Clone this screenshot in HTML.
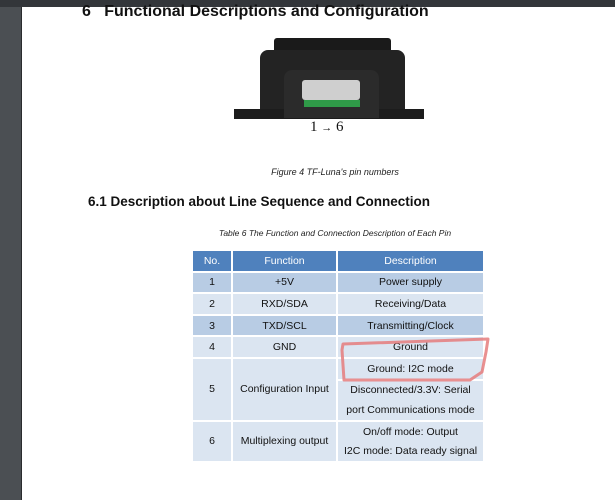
<!DOCTYPE html><html><head><style>
body{margin:0;width:615px;height:500px;background:#fff;position:relative;overflow:hidden;font-family:"Liberation Sans",sans-serif}
.a{position:absolute}
table{border-collapse:collapse;font-size:10.5px;color:#111;text-align:center}
td{border:2px solid #fff;padding:0;height:19.6px;line-height:12px}
</style></head><body>
<div class="a" style="left:0;top:0;width:615px;height:7px;background:#33363a"></div>
<div class="a" style="left:0;top:7px;width:21px;height:493px;background:#4b4f53;border-right:1px solid #2a2c2e"></div>
<div class="a" style="left:82px;top:3px;font-weight:bold;font-size:16px;color:#111;white-space:nowrap">6&nbsp;&nbsp;&nbsp;Functional Descriptions and Configuration</div>
<div class="a" style="left:274px;top:38px;width:117px;height:15px;background:#1a1a1a;border-radius:3px"></div>
<div class="a" style="left:260px;top:50px;width:145px;height:68px;background:#232323;border-radius:8px 8px 0 0"></div>
<div class="a" style="left:234px;top:109px;width:190px;height:10px;background:#1c1c1c"></div>
<div class="a" style="left:284px;top:70px;width:95px;height:48px;background:#2b2b2b;border-radius:8px 8px 0 0"></div>
<div class="a" style="left:302px;top:80px;width:58px;height:20px;background:#cfcfcf;border-radius:3px"></div>
<div class="a" style="left:304px;top:100px;width:56px;height:7px;background:#2f9a48"></div>
<div class="a" style="left:310px;top:119px;font-family:'Liberation Serif',serif;font-size:15px;color:#111">1 <span style="font-size:11px">→</span> 6</div>
<div class="a" style="left:0;width:670px;top:167px;text-align:center;font-style:italic;font-size:9px;color:#222">Figure 4 TF-Luna's pin numbers</div>
<div class="a" style="left:88px;top:194px;font-weight:bold;font-size:13.5px;color:#111">6.1 Description about Line Sequence and Connection</div>
<div class="a" style="left:0;width:670px;top:228px;text-align:center;font-style:italic;font-size:8.5px;color:#222">Table 6 The Function and Connection Description of Each Pin</div>
<table class="a" style="left:191px;top:249px;width:294px">
<tr style="background:#4f81bd;color:#fff"><td style="width:38px">No.</td><td style="width:103px">Function</td><td>Description</td></tr>
<tr style="background:#b8cce4"><td>1</td><td>+5V</td><td>Power supply</td></tr>
<tr style="background:#dbe5f1"><td>2</td><td>RXD/SDA</td><td>Receiving/Data</td></tr>
<tr style="background:#b8cce4"><td>3</td><td>TXD/SCL</td><td>Transmitting/Clock</td></tr>
<tr style="background:#dbe5f1"><td>4</td><td>GND</td><td>Ground</td></tr>
<tr style="background:#dbe5f1"><td rowspan="3">5</td><td rowspan="3">Configuration Input</td><td>Ground: I2C mode</td></tr>
<tr style="background:#dbe5f1"><td style="border-top:0;border-bottom:0">Disconnected/3.3V: Serial</td></tr>
<tr style="background:#dbe5f1"><td style="border-top:0">port Communications mode</td></tr>
<tr style="background:#dbe5f1"><td rowspan="2">6</td><td rowspan="2">Multiplexing output</td><td style="border-bottom:0">On/off mode: Output</td></tr>
<tr style="background:#dbe5f1"><td style="border-top:0">I2C mode: Data ready signal</td></tr>
</table>
<svg class="a" style="left:0;top:0" width="615" height="500"><path d="M343 344 L488 339 L486 352 L482 372 L470 380 L344 380 L342 350 Z" fill="none" stroke="#e57c7c" stroke-width="3" stroke-linejoin="round" opacity="0.85"/></svg>
</body></html>
